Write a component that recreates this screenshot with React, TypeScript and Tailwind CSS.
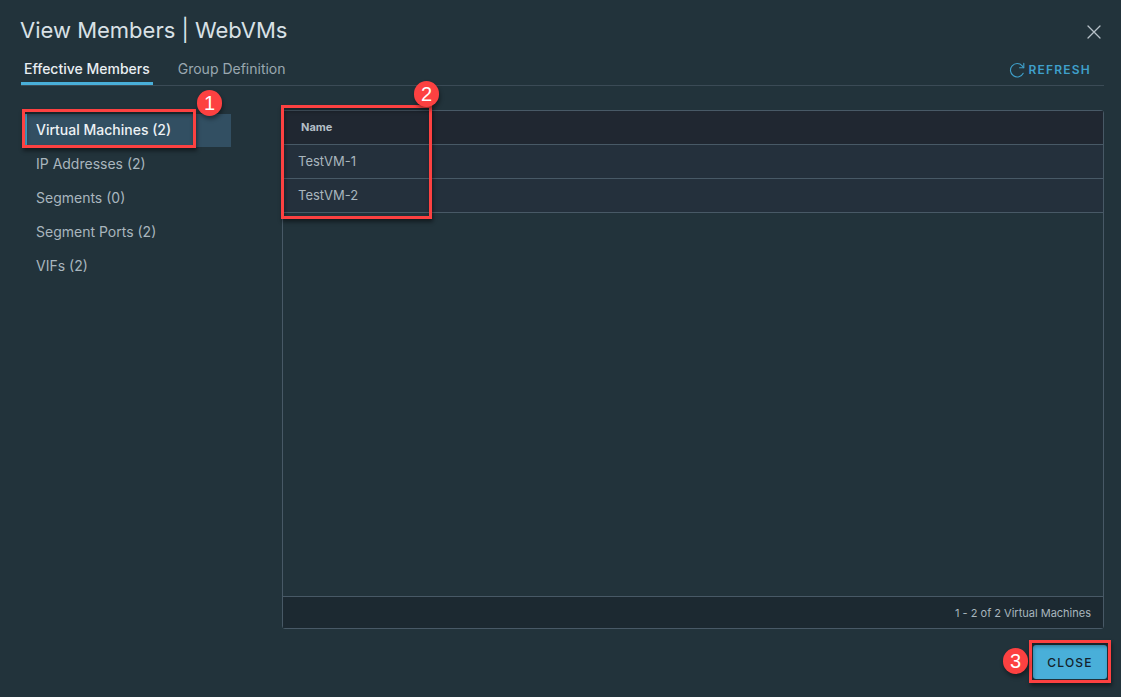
import { useState } from "react";

const sections = [
  { label: "Virtual Machines", count: 2 },
  { label: "IP Addresses", count: 2 },
  { label: "Segments", count: 0 },
  { label: "Segment Ports", count: 2 },
  { label: "VIFs", count: 2 },
];

const machines = ["TestVM-1", "TestVM-2"];

const outline =
  "pointer-events-none absolute border-[3px] border-[#fd4141] shadow-[1px_3px_4px_rgba(0,0,0,0.45),inset_1px_3px_4px_rgba(0,0,0,0.35)]";

function Badge({ value, className }: { value: number; className: string }) {
  return (
    <span
      className={`pointer-events-none absolute flex h-[26px] w-[25px] items-center justify-center rounded-full bg-[#fd4141] font-['Liberation_Sans',sans-serif] text-[20px] leading-none text-white shadow-[1px_3px_4px_rgba(0,0,0,0.4)] ${className}`}
    >
      {value}
    </span>
  );
}

function CloseIcon() {
  return (
    <svg viewBox="0 0 14 14" className="size-3.5" fill="none" stroke="currentColor" strokeWidth="1.3" strokeLinecap="round" aria-hidden="true">
      <path d="M1 1l12 12M13 1L1 13" />
    </svg>
  );
}

function RefreshIcon() {
  return (
    <svg viewBox="0 0 16 16" className="size-4" fill="none" stroke="currentColor" strokeWidth="1.1" strokeLinecap="round" strokeLinejoin="round" aria-hidden="true">
      <path d="M14.2 11.2A6.7 6.7 0 1 1 13.2 3.8L14.6 5.6" />
      <path d="M14.8 1.4V5.7H10.6" />
    </svg>
  );
}

export default function App() {
  const [active, setActive] = useState(0);

  return (
    <main className="flex min-h-screen flex-col bg-[#22333b] font-[Inter,sans-serif] text-[#a9b6be]">
      <header className="flex h-[60px] items-center justify-between pr-5 pl-5">
        <h1 className="text-[22px] leading-7 font-normal text-[#d9e1e6]">View Members | WebVMs</h1>
        <button type="button" aria-label="Close dialog" className="mt-1 text-[#b7c1c8]">
          <CloseIcon />
        </button>
      </header>

      <div className="mr-[17px] ml-[21px] flex h-[26px] items-stretch justify-between border-b border-[#3b4b56]">
        <div className="flex gap-[22px]" role="tablist">
          <button type="button" role="tab" aria-selected="true" className="flex border-b-[3px] border-[#49afd9] px-[3px] text-sm leading-[18px] font-medium text-[#e9eef2]">
            Effective Members
          </button>
          <button type="button" role="tab" aria-selected="false" className="flex px-[3px] text-sm leading-[18px] text-[#9aa8b0]">
            Group Definition
          </button>
        </div>
        <button type="button" className="mr-[13px] flex h-5 items-center gap-1 text-[12px] font-semibold tracking-widest text-[#3fa0cb]">
          <RefreshIcon />
          REFRESH
        </button>
      </div>

      <div className="flex flex-1 gap-[51px] pt-6 pr-[17px] pl-[25px]">
        <nav className="w-[206px] shrink-0 pt-1" aria-label="Member types">
          <ul className="flex flex-col gap-px">
            {sections.map((section, i) => (
              <li key={section.label} className="relative">
                <button
                  type="button"
                  onClick={() => setActive(i)}
                  className={`h-[33px] w-full border-l-2 pb-0.5 pl-[9px] text-left text-sm leading-5 ${
                    i === active ? "border-[#49afd9] bg-[#324f62] font-medium text-[#edf2f5]" : "border-transparent"
                  }`}
                >
                  {section.label} ({section.count})
                </button>
                {i === 0 && (
                  <>
                    <span className={`${outline} -top-[5px] -left-[3px] h-[39px] w-[174px]`} />
                    <Badge value={1} className="-top-6 left-[172px]" />
                  </>
                )}
              </li>
            ))}
          </ul>
        </nav>

        <section className="relative flex flex-1 flex-col rounded-[3px] border border-[#485966]">
          <table className="w-full border-collapse text-left">
            <thead>
              <tr className="h-[33px] border-b border-[#485966] bg-[#202731]">
                <th scope="col" className="pl-[18px] text-[11px] leading-4 font-bold text-[#b3bec6]">Name</th>
              </tr>
            </thead>
            <tbody>
              {machines.map((name) => (
                <tr key={name} className="h-[34px] border-b border-[#485966] bg-[#24303c]">
                  <td className="pl-[15px] text-[13px] leading-5">{name}</td>
                </tr>
              ))}
            </tbody>
          </table>
          <div className="flex-1" />
          <footer className="flex h-8 items-center justify-end border-t border-[#485966] bg-[#1c2931] pr-3 text-[11px] leading-4">
            1 - 2 of 2 Virtual Machines
          </footer>
          <span className={`${outline} -top-1.5 -left-0.5 h-[114px] w-[151px]`} />
          <Badge value={2} className="-top-[30px] left-[131px]" />
        </section>
      </div>

      <footer className="flex justify-end px-3.5 pt-4 pb-[18px]">
        <div className="relative">
          <button type="button" className="h-[34px] w-[74px] rounded-[3px] bg-[#49afd9] pt-0.5 text-[12px] font-medium tracking-widest text-[#14232c]">
            CLOSE
          </button>
          <span className={`${outline} -top-[5px] -left-1 h-[43px] w-[82px]`} />
          <Badge value={3} className="top-[3px] -left-[30px]" />
        </div>
      </footer>
    </main>
  );
}
